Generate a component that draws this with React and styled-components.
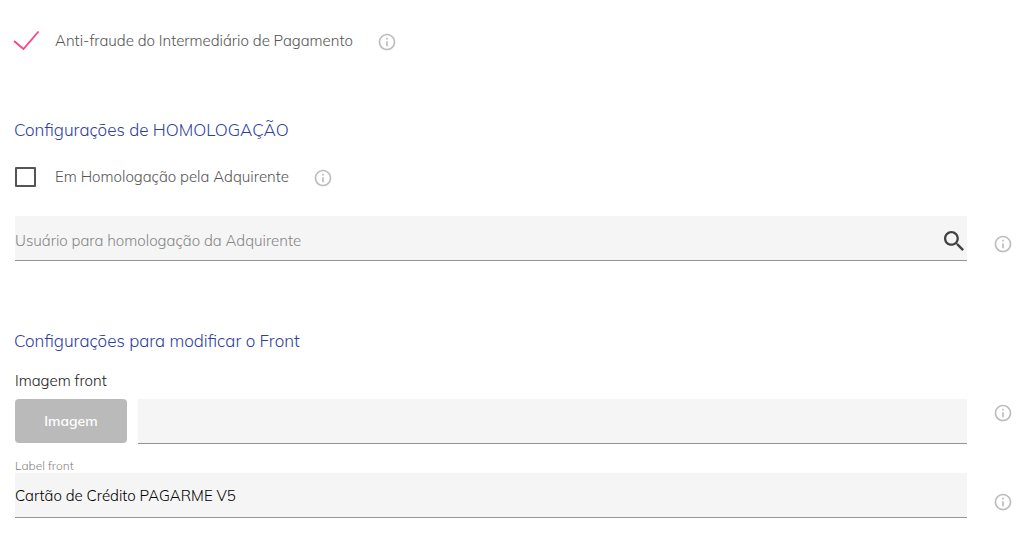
import React, { useState } from "react";
import styled, { createGlobalStyle } from "styled-components";

const GlobalStyle = createGlobalStyle`
  * {
    box-sizing: border-box;
  }

  body {
    margin: 0;
    background-color: #ffffff;
    font-family: Muli, Mulish, Lato, "Liberation Sans", sans-serif;
    font-size: 15px;
    font-weight: 300;
    line-height: 20px;
  }
`;

const Form = styled.form`
  padding: 20px 21px 28px 14px;
`;

const Section = styled.section`
  margin-top: ${(props) => props.$space};
`;

const Title = styled.h2`
  margin: 0;
  font-size: 17px;
  font-weight: 300;
  line-height: 24px;
  color: #303f9f;
`;

const CheckRow = styled.div`
  display: flex;
  align-items: center;
  gap: 24px;
  height: 42px;
  margin-top: ${(props) => props.$space || "0"};
  padding-left: 1px;
`;

const CheckLabel = styled.label`
  display: flex;
  align-items: center;
  color: #555555;
  cursor: pointer;
`;

const CheckCell = styled.span`
  display: grid;
  align-items: center;
  width: 40px;

  > * {
    grid-area: 1 / 1;
  }
`;

const CheckInput = styled.input`
  appearance: none;
  width: 21px;
  height: 20px;
  margin: 0;
  border: 2px solid #555555;
  border-radius: 1px;
  cursor: pointer;

  &:checked {
    border-color: transparent;
  }
`;

const Tick = styled.svg`
  overflow: visible;
  pointer-events: none;
`;

const InfoButton = styled.button`
  display: flex;
  flex: none;
  align-self: ${(props) => props.$align};
  padding: ${(props) => props.$inset};
  border: 0;
  background: none;
  color: #bdbdbd;
  cursor: pointer;
`;

const FieldRow = styled.div`
  display: flex;
  gap: 26px;
  margin-top: ${(props) => props.$space};
  padding-left: 1px;
`;

const FieldBox = styled.div`
  display: flex;
  flex: 1;
  align-items: center;
  height: 45px;
  padding: ${(props) => props.$inset || "0 3px 0 0"};
  background-color: #f5f5f5;
  border-bottom: 1px solid #949494;
`;

const TextInput = styled.input`
  flex: 1;
  min-width: 0;
  height: 100%;
  padding: 0;
  border: 0;
  outline: 0;
  background: none;
  color: #000000;
  font: inherit;

  &::placeholder {
    color: #858585;
    opacity: 1;
  }
`;

const SearchButton = styled.button`
  display: flex;
  padding: 0;
  border: 0;
  background: none;
  color: #424242;
  cursor: pointer;
`;

const FieldLabel = styled.label`
  display: block;
  margin-top: ${(props) => props.$space};
  padding-left: 1px;
  color: #212121;
`;

const SmallLabel = styled(FieldLabel)`
  font-size: 12px;
  line-height: 14px;
  color: #858585;
`;

const FileGroup = styled.div`
  display: flex;
  flex: 1;
  gap: 11px;
`;

const FileButton = styled.button`
  width: 112px;
  height: 44px;
  padding: 0;
  border: 0;
  border-radius: 4px;
  background-color: #bababa;
  color: #ffffff;
  font-family: inherit;
  font-size: 14px;
  font-weight: 600;
  cursor: pointer;
`;

function Info({ about, align, inset }) {
  return (
    <InfoButton type="button" aria-label={about} $align={align} $inset={inset}>
      <svg width="20" height="20" viewBox="0 0 24 24" fill="currentColor">
        <path d="M11 7h2v2h-2zm0 4h2v6h-2zm1-9C6.480 2 2 6.480 2 12s4.480 10 10 10 10-4.480 10-10S17.520 2 12 2zm0 18c-4.410 0-8-3.590-8-8s3.590-8 8-8 8 3.590 8 8-3.590 8-8 8z" />
      </svg>
    </InfoButton>
  );
}

function CheckField({ label, initial, space }) {
  const [checked, setChecked] = useState(initial);
  return (
    <CheckRow $space={space}>
      <CheckLabel>
        <CheckCell>
          <CheckInput
            type="checkbox"
            checked={checked}
            onChange={(e) => setChecked(e.target.checked)}
          />
          {checked && (
            <Tick width="24" height="20" viewBox="0 0 24 20" fill="none">
              <path d="M-1 10L8.500 18L23.500 0.500" stroke="#ff4081" strokeWidth="1.800" />
            </Tick>
          )}
        </CheckCell>
        {label}
      </CheckLabel>
      <Info about={label} align="center" inset="2px 0 0" />
    </CheckRow>
  );
}

function App() {
  const [user, setUser] = useState("");
  const [image, setImage] = useState("");
  const [front, setFront] = useState("Cartão de Crédito PAGARME V5");
  return (
    <>
      <GlobalStyle />
      <Form>
        <CheckField label="Anti-fraude do Intermediário de Pagamento" initial={true} />
        <Section $space="56px">
          <Title>Configurações de HOMOLOGAÇÃO</Title>
          <CheckField
            label="Em Homologação pela Adquirente"
            initial={false}
            space="14px"
          />
          <FieldRow $space="18px">
            <FieldBox $inset="5px 3px 0 0">
              <TextInput
                aria-label="Usuário para homologação da Adquirente"
                placeholder="Usuário para homologação da Adquirente"
                value={user}
                onChange={(e) => setUser(e.target.value)}
              />
              <SearchButton type="button" aria-label="Buscar">
                <svg width="20" height="20" viewBox="3 3 17.5 17.5" fill="currentColor">
                  <path d="M15.500 14h-.79l-.28-.27C15.410 12.590 16 11.110 16 9.500 16 5.910 13.090 3 9.500 3S3 5.910 3 9.500 5.910 16 9.500 16c1.610 0 3.090-.59 4.230-1.570l.27.28v.79l5 4.990L20.490 19l-4.990-5zm-6 0C7.010 14 5 11.990 5 9.500S7.010 5 9.500 5 14 7.010 14 9.500 11.990 14 9.500 14z" />
                </svg>
              </SearchButton>
            </FieldBox>
            <Info
              about="Usuário para homologação"
              align="flex-end"
              inset="0 0 7px"
            />
          </FieldRow>
        </Section>
        <Section $space="68px">
          <Title>Configurações para modificar o Front</Title>
          <FieldLabel htmlFor="image" $space="18px">
            Imagem front
          </FieldLabel>
          <FieldRow $space="8px">
            <FileGroup>
              <FileButton type="button">Imagem</FileButton>
              <FieldBox>
                <TextInput
                  id="image"
                  value={image}
                  onChange={(e) => setImage(e.target.value)}
                />
              </FieldBox>
            </FileGroup>
            <Info about="Imagem front" align="flex-start" inset="4px 0 0" />
          </FieldRow>
          <SmallLabel htmlFor="front" $space="15px">
            Label front
          </SmallLabel>
          <FieldRow $space="0">
            <FieldBox>
              <TextInput
                id="front"
                value={front}
                onChange={(e) => setFront(e.target.value)}
              />
            </FieldBox>
            <Info about="Label front" align="flex-end" inset="0 0 6px" />
          </FieldRow>
        </Section>
      </Form>
    </>
  );
}

export default App;
